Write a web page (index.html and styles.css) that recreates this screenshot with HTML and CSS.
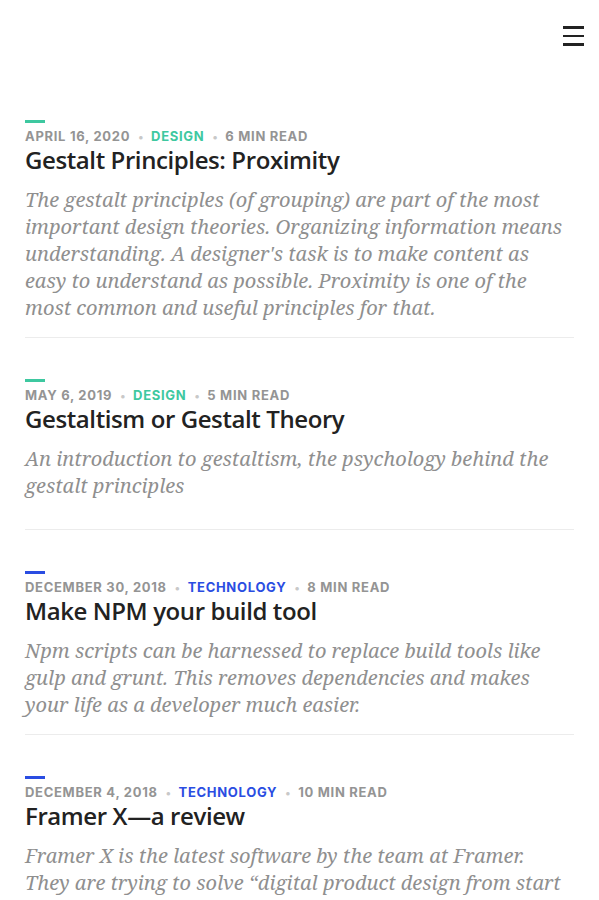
FILE: index.html
```html
<!DOCTYPE html>
<html lang="en">
<head>
<meta charset="utf-8">
<title>Blog</title>
<link rel="stylesheet" href="styles.css">
</head>
<body>
<header class="topbar">
  <button class="menu-btn" aria-label="Menu">
    <span class="menu-line"></span>
    <span class="menu-line"></span>
    <span class="menu-line"></span>
  </button>
</header>
<main class="posts">
  <article class="post post--design">
    <div class="post-accent"></div>
    <div class="post-meta">
      <span>April 16, 2020</span><span class="dot">•</span><span class="cat">Design</span><span class="dot">•</span><span>6 min read</span>
    </div>
    <h2 class="post-title">Gestalt Principles: Proximity</h2>
    <p class="post-excerpt">The gestalt principles (of grouping) are part of the most important design theories. Organizing information means understanding. A designer's task is to make content as easy to understand as possible. Proximity is one of the most common and useful principles for that.</p>
  </article>
  <article class="post post--design post--short">
    <div class="post-accent"></div>
    <div class="post-meta">
      <span>May 6, 2019</span><span class="dot">•</span><span class="cat">Design</span><span class="dot">•</span><span>5 min read</span>
    </div>
    <h2 class="post-title">Gestaltism or Gestalt Theory</h2>
    <p class="post-excerpt">An introduction to gestaltism, the psychology behind the gestalt principles</p>
  </article>
  <article class="post post--tech">
    <div class="post-accent"></div>
    <div class="post-meta">
      <span>December 30, 2018</span><span class="dot">•</span><span class="cat">Technology</span><span class="dot">•</span><span>8 min read</span>
    </div>
    <h2 class="post-title">Make NPM your build tool</h2>
    <p class="post-excerpt">Npm scripts can be harnessed to replace build tools like gulp and grunt. This removes dependencies and makes your life as a developer much easier.</p>
  </article>
  <article class="post post--tech">
    <div class="post-accent"></div>
    <div class="post-meta">
      <span>December 4, 2018</span><span class="dot">•</span><span class="cat">Technology</span><span class="dot">•</span><span>10 min read</span>
    </div>
    <h2 class="post-title">Framer X—a review</h2>
    <p class="post-excerpt">Framer X is the latest software by the team at Framer. They are trying to solve “digital product design from start to finish”, and this review takes a closer look at how well it does that.</p>
  </article>
</main>
</body>
</html>
```
FILE: styles.css
```css
* { box-sizing: border-box; }
html, body { margin: 0; padding: 0; background: #fff; }
body { font-family: "Open Sans", "Liberation Sans", sans-serif; color: #222; }

.topbar {
  display: flex;
  justify-content: flex-end;
  padding: 26px 15px 0 0;
  height: 79px;
}
.menu-btn {
  display: flex;
  flex-direction: column;
  gap: 6px;
  width: 21px;
  padding: 0;
  border: 0;
  background: none;
}
.menu-line {
  display: block;
  width: 21px;
  height: 2.5px;
  background: #222;
}

.posts { padding: 0 25px; }
.post {
  padding: 41px 0 0;
  border-bottom: 1px solid #ececec;
}
.post-accent {
  width: 20px;
  height: 3px;
  margin-bottom: 5px;
}
.post--design .post-accent { background: #3ec8a0; }
.post--tech .post-accent { background: #2a4de2; }

.post-meta {
  font-family: "Inter", "Liberation Sans", sans-serif;
  font-size: 13px;
  font-weight: 700;
  letter-spacing: 0.7px;
  text-transform: uppercase;
  color: #949494;
  line-height: 16px;
}
.post-meta .dot { margin: 0 7px 0 8px; color: #c8c8c8; font-size: 11px; }
.post--design .cat { color: #3ec8a0; }
.post--tech .cat { color: #2a4de2; }

.post-title {
  margin: 0;
  font-family: "Open Sans", "Liberation Sans", sans-serif;
  font-weight: 600;
  font-size: 24px;
  letter-spacing: -0.4px;
  line-height: 30px;
  color: #222;
}
.post-excerpt {
  margin: 11px 0 0;
  padding-bottom: 16px;
  font-family: "Noto Serif", "DejaVu Serif", serif;
  font-style: italic;
  font-size: 20px;
  line-height: 27px;
  color: #8f8f8f;
}
.post--short .post-excerpt { padding-bottom: 30px; }
```
